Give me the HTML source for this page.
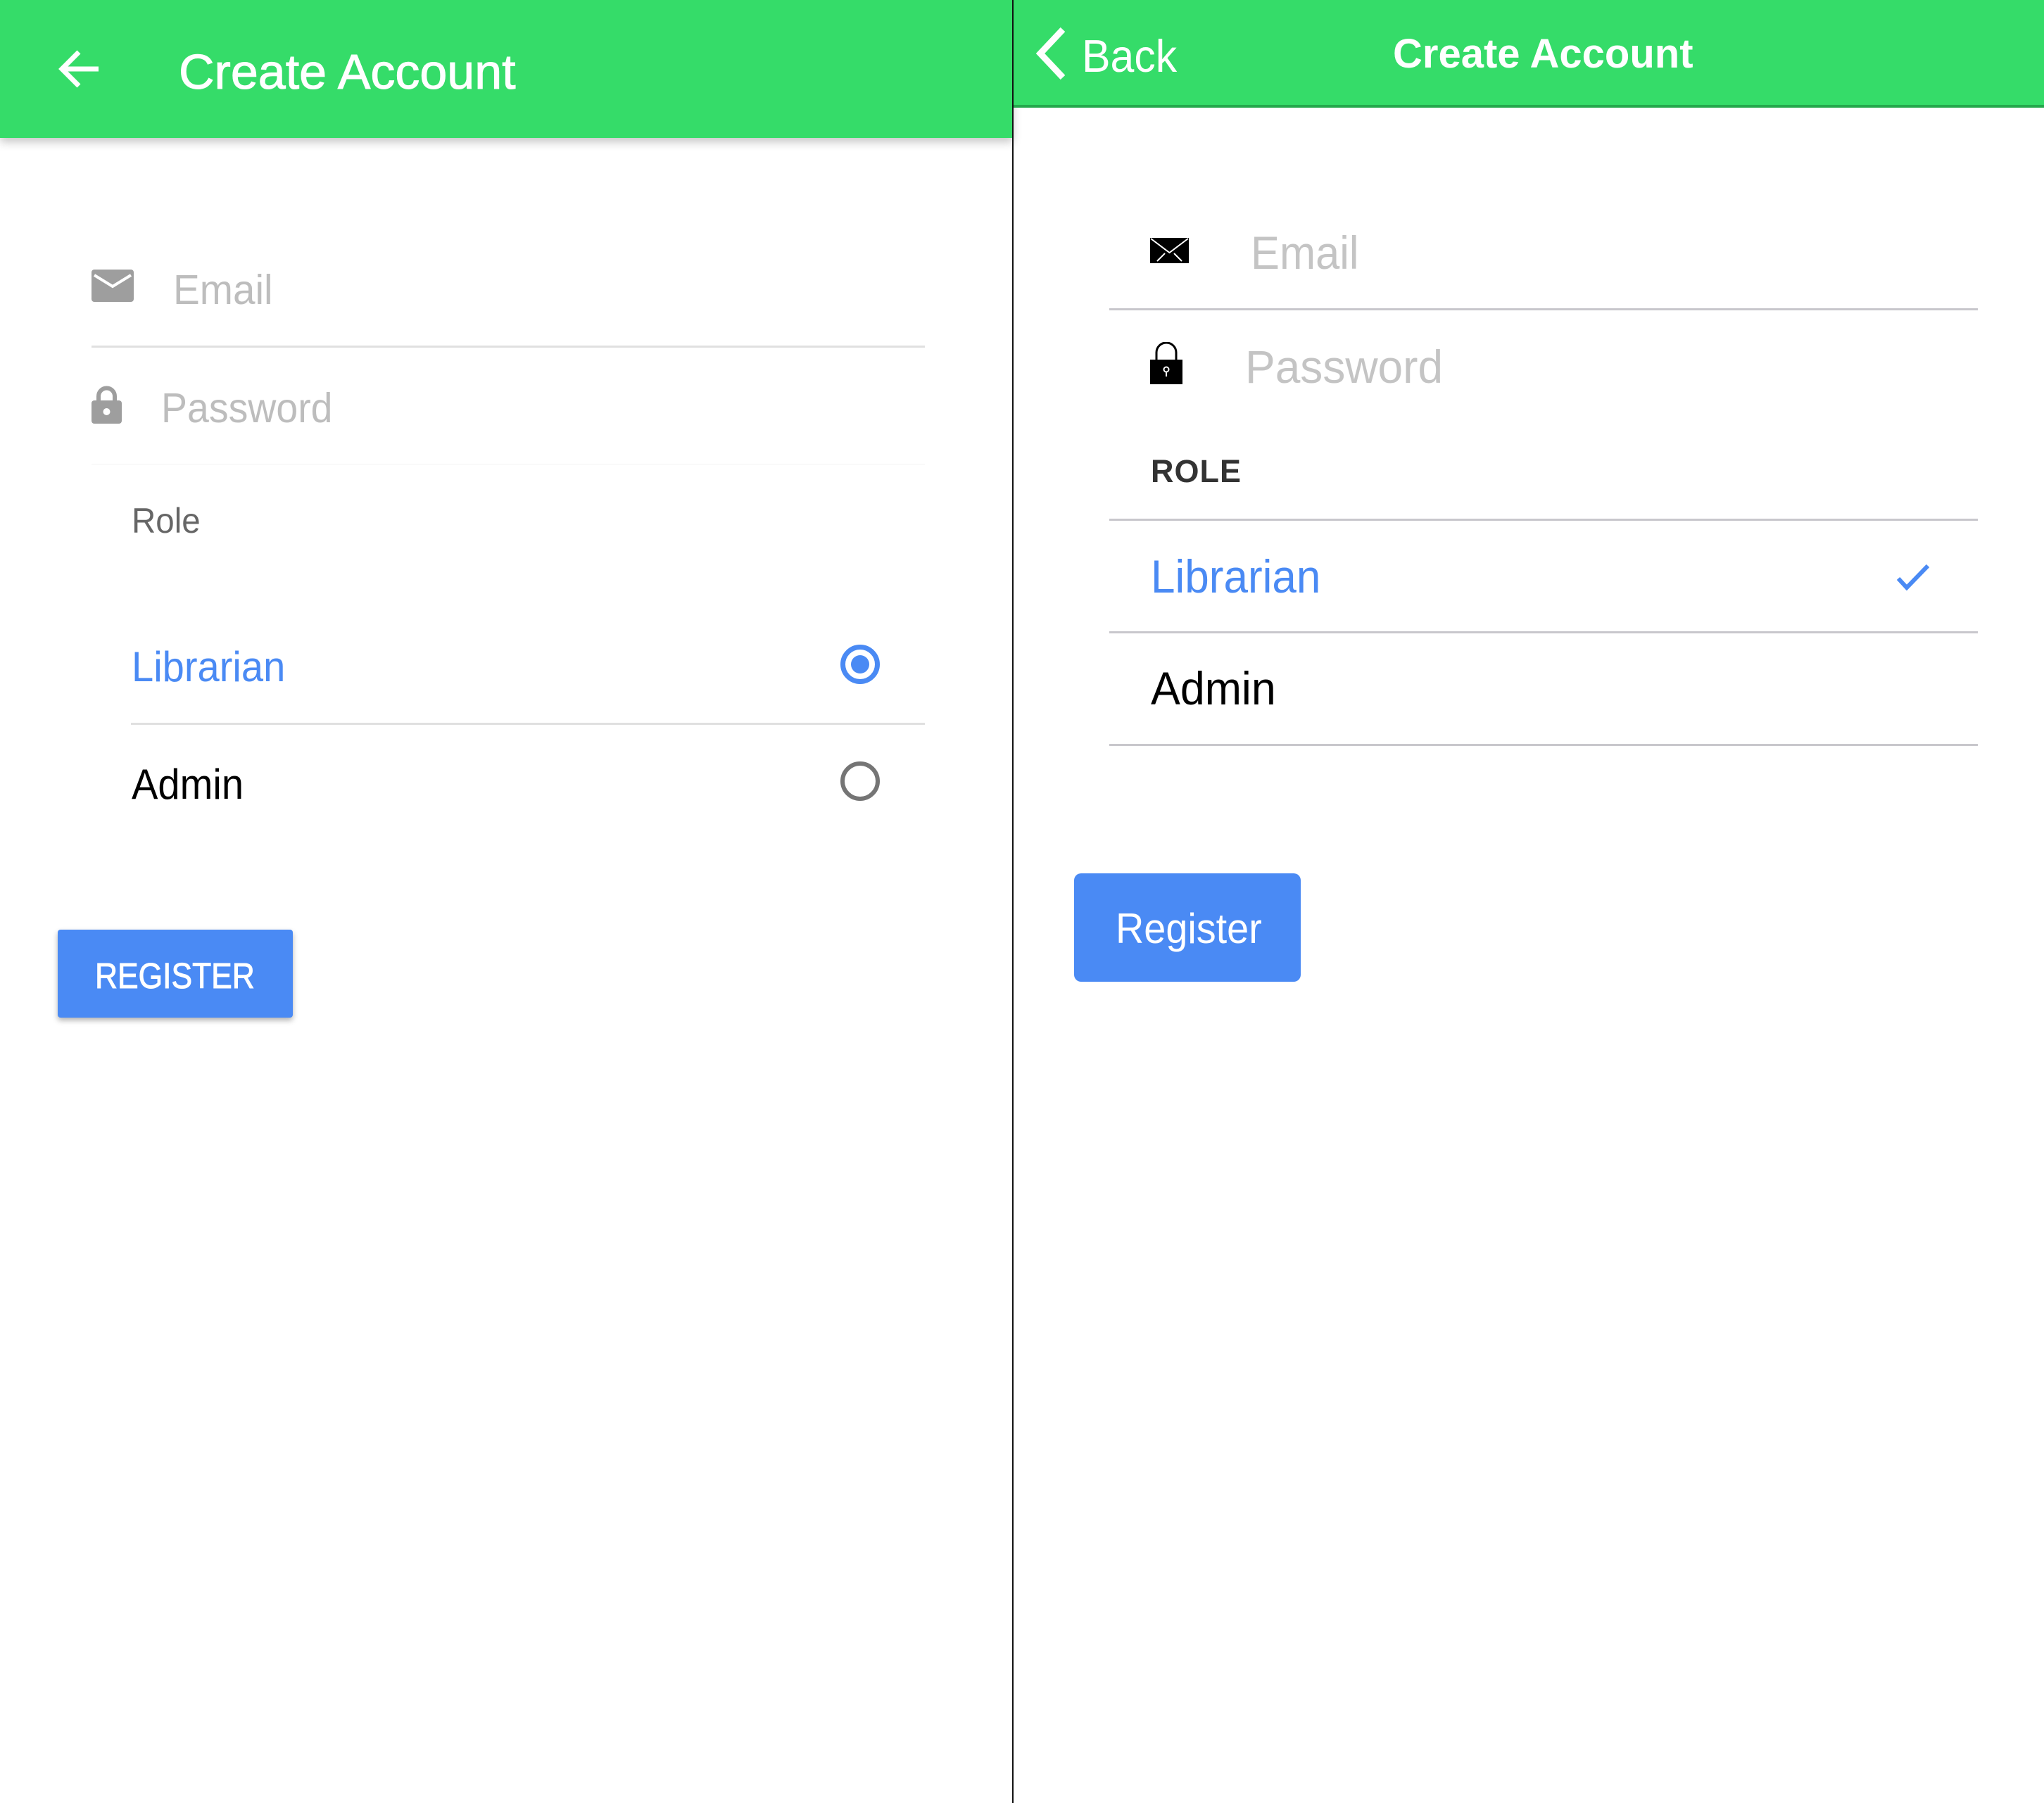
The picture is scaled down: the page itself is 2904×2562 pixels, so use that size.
<!DOCTYPE html>
<html><head><meta charset="utf-8"><style>
*{margin:0;padding:0;box-sizing:border-box}
body{width:2904px;height:2562px;background:#fff;position:relative;overflow:hidden;font-family:"Liberation Sans",Arial,sans-serif}
.a{position:absolute;white-space:nowrap;line-height:1;transform-origin:0 0}
.ln{position:absolute;height:3px}
</style></head><body>
<!-- LEFT -->
<div class="a" style="left:0;top:0;width:1439px;height:196px;background:#35dc69;box-shadow:0 6px 12px rgba(0,0,0,0.22)"></div>
<svg class="a" style="left:80px;top:68px" width="64" height="62" viewBox="0 0 64 62"><path d="M60 30H10M32 6L8 30l24 24" stroke="#fff" stroke-width="7" fill="none"/></svg>
<div class="a" style="left:254px;top:67px;font-size:70px;color:#fff;-webkit-text-stroke:1px #fff">Create Account</div>

<svg class="a" style="left:130px;top:383px" width="60" height="46" viewBox="0 0 60 46"><rect width="60" height="46" rx="4" fill="#9e9e9e"/><path d="M4 8l26 16L56 8" stroke="#fff" stroke-width="4" fill="none"/></svg>
<div class="a" style="left:246px;top:383px;font-size:59px;color:#bdbdbd;transform:scaleX(.96)">Email</div>
<div class="ln" style="left:130px;top:491px;width:1184px;background:#e0e0e0"></div>

<svg class="a" style="left:130px;top:547px" width="43" height="55" viewBox="0 0 43 55"><path d="M10 24V16a11.5 11.5 0 0 1 23 0v8" stroke="#9e9e9e" stroke-width="6" fill="none"/><rect y="22" width="43" height="33" rx="4" fill="#9e9e9e"/><circle cx="21.5" cy="38" r="5" fill="#fff"/></svg>
<div class="a" style="left:229px;top:551px;font-size:59px;color:#bdbdbd;transform:scaleX(.94)">Password</div>
<div class="ln" style="left:130px;top:659px;width:1184px;height:1px;background:#f4f4f4"></div>

<div class="a" style="left:187px;top:715px;font-size:50px;color:#666;transform:scaleX(.95)">Role</div>
<div class="a" style="left:187px;top:918px;font-size:60px;color:#4a8af4;transform:scaleX(.935)">Librarian</div>
<div class="a" style="left:1194px;top:916px;width:56px;height:56px;border:7px solid #4a8af4;border-radius:50%"></div>
<div class="a" style="left:1209px;top:931px;width:26px;height:26px;background:#4a8af4;border-radius:50%"></div>
<div class="ln" style="left:186px;top:1027px;width:1128px;background:#e0e0e0"></div>
<div class="a" style="left:187px;top:1085px;font-size:60px;color:#000;transform:scaleX(.935)">Admin</div>
<div class="a" style="left:1194px;top:1082px;width:56px;height:56px;border:6px solid #757575;border-radius:50%"></div>

<div class="a" style="left:82px;top:1321px;width:334px;height:125px;background:#4a8af4;border-radius:4px;box-shadow:0 4px 8px rgba(0,0,0,0.3)"></div>
<div class="a" style="left:135px;top:1361px;font-size:51px;color:#fff;-webkit-text-stroke:1px #fff;transform:scaleX(.87)">REGISTER</div>

<!-- divider -->
<div class="a" style="left:1438px;top:0;width:2px;height:2562px;background:#111"></div>

<!-- RIGHT -->
<div class="a" style="left:1440px;top:0;width:1464px;height:149px;background:#35dc69"></div>
<div class="a" style="left:1440px;top:149px;width:1464px;height:4px;background:#24a84c"></div>
<svg class="a" style="left:1468px;top:38px" width="52" height="76" viewBox="0 0 52 76"><path d="M42 4L10 38l32 34" stroke="#fff" stroke-width="9" fill="none"/></svg>
<div class="a" style="left:1537px;top:47px;font-size:65px;color:#fff;transform:scaleX(.935)">Back</div>
<div class="a" style="left:1979px;top:48px;font-size:58px;font-weight:bold;color:#fff">Create Account</div>

<svg class="a" style="left:1634px;top:338px" width="55" height="36" viewBox="0 0 55 36"><rect width="55" height="36" fill="#000"/><path d="M1 1l26.5 20L54 1M10 33l11-11M45 33L34 22" stroke="#fff" stroke-width="2" fill="none"/></svg>
<div class="a" style="left:1777px;top:326px;font-size:66px;color:#c4c4c4;transform:scaleX(.93)">Email</div>
<div class="ln" style="left:1576px;top:438px;width:1234px;background:#c8c7cc"></div>

<svg class="a" style="left:1634px;top:486px" width="46" height="60" viewBox="0 0 46 60"><path d="M9 27V15a14 14 0 0 1 28 0v12" stroke="#000" stroke-width="3" fill="none"/><rect y="25" width="46" height="35" fill="#000"/><circle cx="23" cy="39" r="3.5" stroke="#fff" stroke-width="2" fill="none"/><path d="M23 42v7" stroke="#fff" stroke-width="2"/></svg>
<div class="a" style="left:1769px;top:488px;font-size:66px;color:#c4c4c4;transform:scaleX(.97)">Password</div>

<div class="a" style="left:1635px;top:647px;font-size:45px;font-weight:bold;letter-spacing:1px;color:#333">ROLE</div>
<div class="ln" style="left:1576px;top:737px;width:1234px;background:#c8c7cc"></div>
<div class="a" style="left:1635px;top:786px;font-size:66px;color:#4a8af4;transform:scaleX(.94)">Librarian</div>
<svg class="a" style="left:2694px;top:800px" width="48" height="40" viewBox="0 0 48 40"><path d="M3 22l12 13L45 4" stroke="#4a8af4" stroke-width="6" fill="none"/></svg>
<div class="ln" style="left:1576px;top:897px;width:1234px;background:#c8c7cc"></div>
<div class="a" style="left:1635px;top:945px;font-size:66px;color:#000;transform:scaleX(.95)">Admin</div>
<div class="ln" style="left:1576px;top:1057px;width:1234px;background:#c8c7cc"></div>

<div class="a" style="left:1526px;top:1241px;width:322px;height:154px;background:#4a8af4;border-radius:10px"></div>
<div class="a" style="left:1585px;top:1290px;font-size:60px;color:#fff;transform:scaleX(.93)">Register</div>
</body></html>
